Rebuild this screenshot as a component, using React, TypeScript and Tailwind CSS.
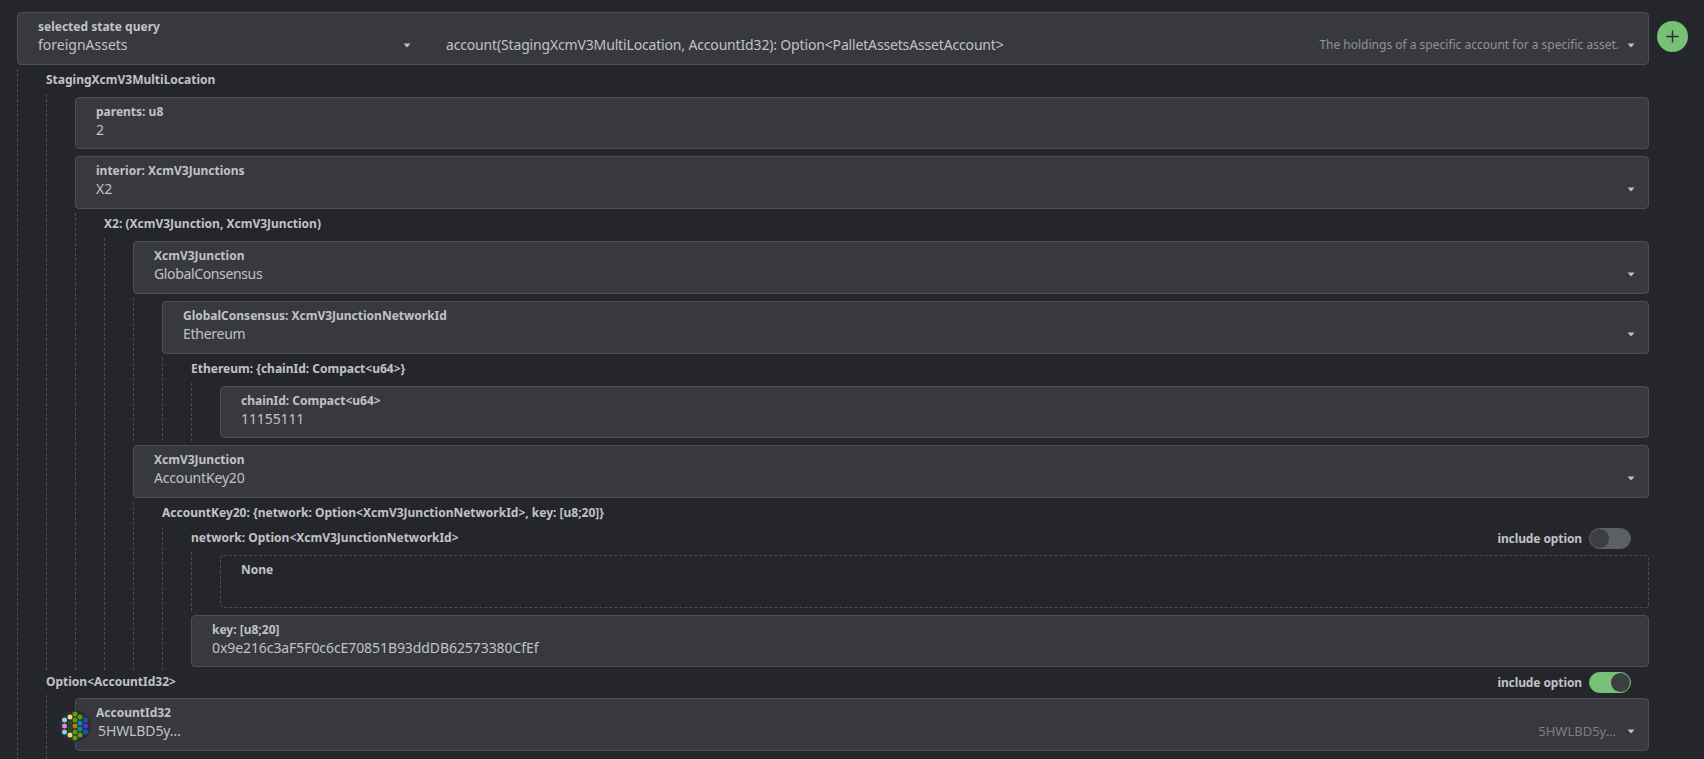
import React from "react";
import { Plus } from "lucide-react";

type FieldProps = {
  label: string;
  value?: string;
  select?: boolean;
  hint?: string;
  tall?: boolean;
  valueClass?: string;
  children?: React.ReactNode;
};

function Caret() {
  return (
    <svg width="8" height="5" viewBox="0 0 8 5" className="shrink-0">
      <path d="M0.5 0.5 H7.5 L4 4.5 Z" fill="#c1c2c5" />
    </svg>
  );
}

function Label({ children }: { children: React.ReactNode }) {
  return <div className="text-xs leading-[14px] font-bold text-[#c1c2c5]">{children}</div>;
}

function Field({ label, value, select, hint, tall, valueClass, children }: FieldProps) {
  return (
    <div
      className={`relative rounded border border-[#4d4e53] bg-[#38393e] pl-[20px] pr-[13px] pt-[7px] ${
        tall ? "h-[53px]" : "h-[52px]"
      }`}
    >
      {children}
      <Label>{label}</Label>
      <div className="mt-[1px] flex h-5 items-center justify-between text-sm leading-5 text-[#c1c2c5]">
        <span className={valueClass}>{value}</span>
        {select && (
          <span className="flex items-center">
            {hint && <span className="mr-[11px] text-[13px] text-[#7e7f83]">{hint}</span>}
            <Caret />
          </span>
        )}
      </div>
    </div>
  );
}

function Nested({ children, top = true }: { children: React.ReactNode; top?: boolean }) {
  return (
    <div className={`flex flex-col gap-1 border-l border-dashed border-[#4d4e53] pl-[28px] ${top ? "pt-[3px]" : ""}`}>
      {children}
    </div>
  );
}

function Leaf({ children }: { children: React.ReactNode }) {
  return <div className="pb-[3px]">{children}</div>;
}

function Heading({ children, toggle, short }: { children: React.ReactNode; toggle?: boolean; short?: boolean }) {
  return (
    <div
      className={`flex justify-between pr-[18px] text-xs font-bold leading-[14px] text-[#c1c2c5] ${
        short ? "h-[21px] pt-[1px]" : "h-[25px] pt-[4px]"
      }`}
    >
      <span>{children}</span>
      {toggle !== undefined && <IncludeOption on={toggle} />}
    </div>
  );
}

function IncludeOption({ on }: { on: boolean }) {
  return (
    <span className="-mt-[3px] flex h-[21px] items-center gap-[7px]">
      <span className="pt-[1px] tracking-[-0.1px]">include option</span>
      <span
        className={`flex h-[21px] w-[42px] rounded-full border ${
          on ? "justify-end border-[#77c177] bg-[#77c177]" : "justify-start border-[#5c5f66] bg-[#5c5f66]"
        }`}
      >
        <span className="h-[19px] w-[19px] rounded-full bg-[#3d3e42]" />
      </span>
    </span>
  );
}

const dots: [number, number, string][] = [
  [64.5, 720, "#6fdde6"],
  [64.5, 726, "#ef7fd6"],
  [64.5, 732, "#6fdde6"],
  [70, 717, "#f3d67f"],
  [70, 723, "#2f4a14"],
  [70, 729, "#2f4a14"],
  [70, 735, "#f3d67f"],
  [75, 714, "#5b9a0c"],
  [75, 720, "#5b9a0c"],
  [75, 726, "#a08a10"],
  [75, 732, "#5b9a0c"],
  [75, 738, "#5b9a0c"],
  [80, 717, "#5b9a0c"],
  [80, 723, "#0b87a8"],
  [80, 729, "#0b87a8"],
  [80, 735, "#5b9a0c"],
  [85.5, 720, "#1257a8"],
  [85.5, 726, "#4433e8"],
  [85.5, 732, "#1257a8"],
];

function Identicon() {
  return (
    <svg width="32" height="32" viewBox="59 710 32 32" className="absolute left-[-17px] top-[11px]">
      <circle cx="75" cy="726" r="16" fill="#2c2d31" />
      {dots.map(([x, y, c], i) => (
        <circle key={i} cx={x} cy={y} r="2.5" fill={c} />
      ))}
    </svg>
  );
}

export default function App() {
  return (
    <div className="h-[759px] w-full overflow-hidden bg-[#25262b] pl-[17px] pt-3 font-['Noto_Sans',sans-serif]">
      <div className="w-[1672px]">
        <div className="flex items-start gap-2">
          <div className="h-[53px] w-[1632px] shrink-0 rounded border border-[#4d4e53] bg-[#38393e] pl-[20px] pr-[13px] pt-[7px]">
            <Label>selected state query</Label>
            <div className="mt-[1px] flex h-5 items-center text-sm leading-5 text-[#c1c2c5]">
              <div className="flex w-[373px] items-center justify-between">
                <span>foreignAssets</span>
                <Caret />
              </div>
              <div className="ml-[35px] flex flex-1 items-center justify-between">
                <span className="tracking-[-0.16px]">
                  account(StagingXcmV3MultiLocation, AccountId32): Option&lt;PalletAssetsAssetAccount&gt;
                </span>
                <span className="flex items-center gap-[8px]">
                  <span className="text-xs text-[#909296]">The holdings of a specific account for a specific asset.</span>
                  <Caret />
                </span>
              </div>
            </div>
          </div>
          <button className="mt-[9px] flex h-[31px] w-[31px] items-center justify-center rounded-full bg-[#77c177] text-[#2c2e33]">
            <Plus size={19} strokeWidth={1.8} />
          </button>
        </div>

        <div className="mt-1 w-[1632px]">
          <Nested top={false}>
            <div>
              <Heading>StagingXcmV3MultiLocation</Heading>
              <Nested>
                <Leaf>
                  <Field label="parents: u8" value="2" />
                </Leaf>
                <div className="flex flex-col gap-1">
                  <Field label="interior: XcmV3Junctions" value="X2" select tall />
                  <Nested top={false}>
                    <div>
                      <Heading>X2: (XcmV3Junction, XcmV3Junction)</Heading>
                      <Nested>
                        <div className="flex flex-col gap-1">
                          <Field
                            label="XcmV3Junction"
                            value="GlobalConsensus"
                            select
                            tall
                            valueClass="tracking-[-0.36px]"
                          />
                          <Nested>
                            <div className="flex flex-col gap-1">
                              <Field
                                label="GlobalConsensus: XcmV3JunctionNetworkId"
                                value="Ethereum"
                                select
                                tall
                                valueClass="tracking-[-0.27px]"
                              />
                              <Nested top={false}>
                                <div>
                                  <Heading>Ethereum: {"{chainId: Compact<u64>}"}</Heading>
                                  <Nested>
                                    <Leaf>
                                      <Field label="chainId: Compact<u64>" value="11155111" valueClass="tracking-[-0.1px]" />
                                    </Leaf>
                                  </Nested>
                                </div>
                              </Nested>
                            </div>
                          </Nested>
                        </div>
                        <div className="flex flex-col gap-1">
                          <Field
                            label="XcmV3Junction"
                            value="AccountKey20"
                            select
                            tall
                            valueClass="tracking-[-0.18px]"
                          />
                          <Nested top={false}>
                            <div>
                              <Heading>AccountKey20: {"{network: Option<XcmV3JunctionNetworkId>, key: [u8;20]}"}</Heading>
                              <Nested top={false}>
                                <div>
                                  <Heading toggle={false}>network: Option&lt;XcmV3JunctionNetworkId&gt;</Heading>
                                  <Nested>
                                    <Leaf>
                                      <div className="h-[53px] rounded border border-dashed border-[#4d4e53] pl-[20px] pt-[7px]">
                                        <Label>None</Label>
                                      </div>
                                    </Leaf>
                                  </Nested>
                                </div>
                                <Leaf>
                                  <Field
                                    label="key: [u8;20]"
                                    value="0x9e216c3aF5F0c6cE70851B93ddDB62573380CfEf"
                                    valueClass="tracking-[-0.08px]"
                                  />
                                </Leaf>
                              </Nested>
                            </div>
                          </Nested>
                        </div>
                      </Nested>
                    </div>
                  </Nested>
                </div>
              </Nested>
            </div>
            <div>
              <Heading toggle short>
                Option&lt;AccountId32&gt;
              </Heading>
              <Nested>
                <Field
                  label="AccountId32"
                  value="5HWLBD5y…"
                  select
                  hint="5HWLBD5y…"
                  tall
                  valueClass="ml-[2px] tracking-[-0.1px]"
                >
                  <Identicon />
                </Field>
                <div className="h-10" />
              </Nested>
            </div>
          </Nested>
        </div>
      </div>
    </div>
  );
}
